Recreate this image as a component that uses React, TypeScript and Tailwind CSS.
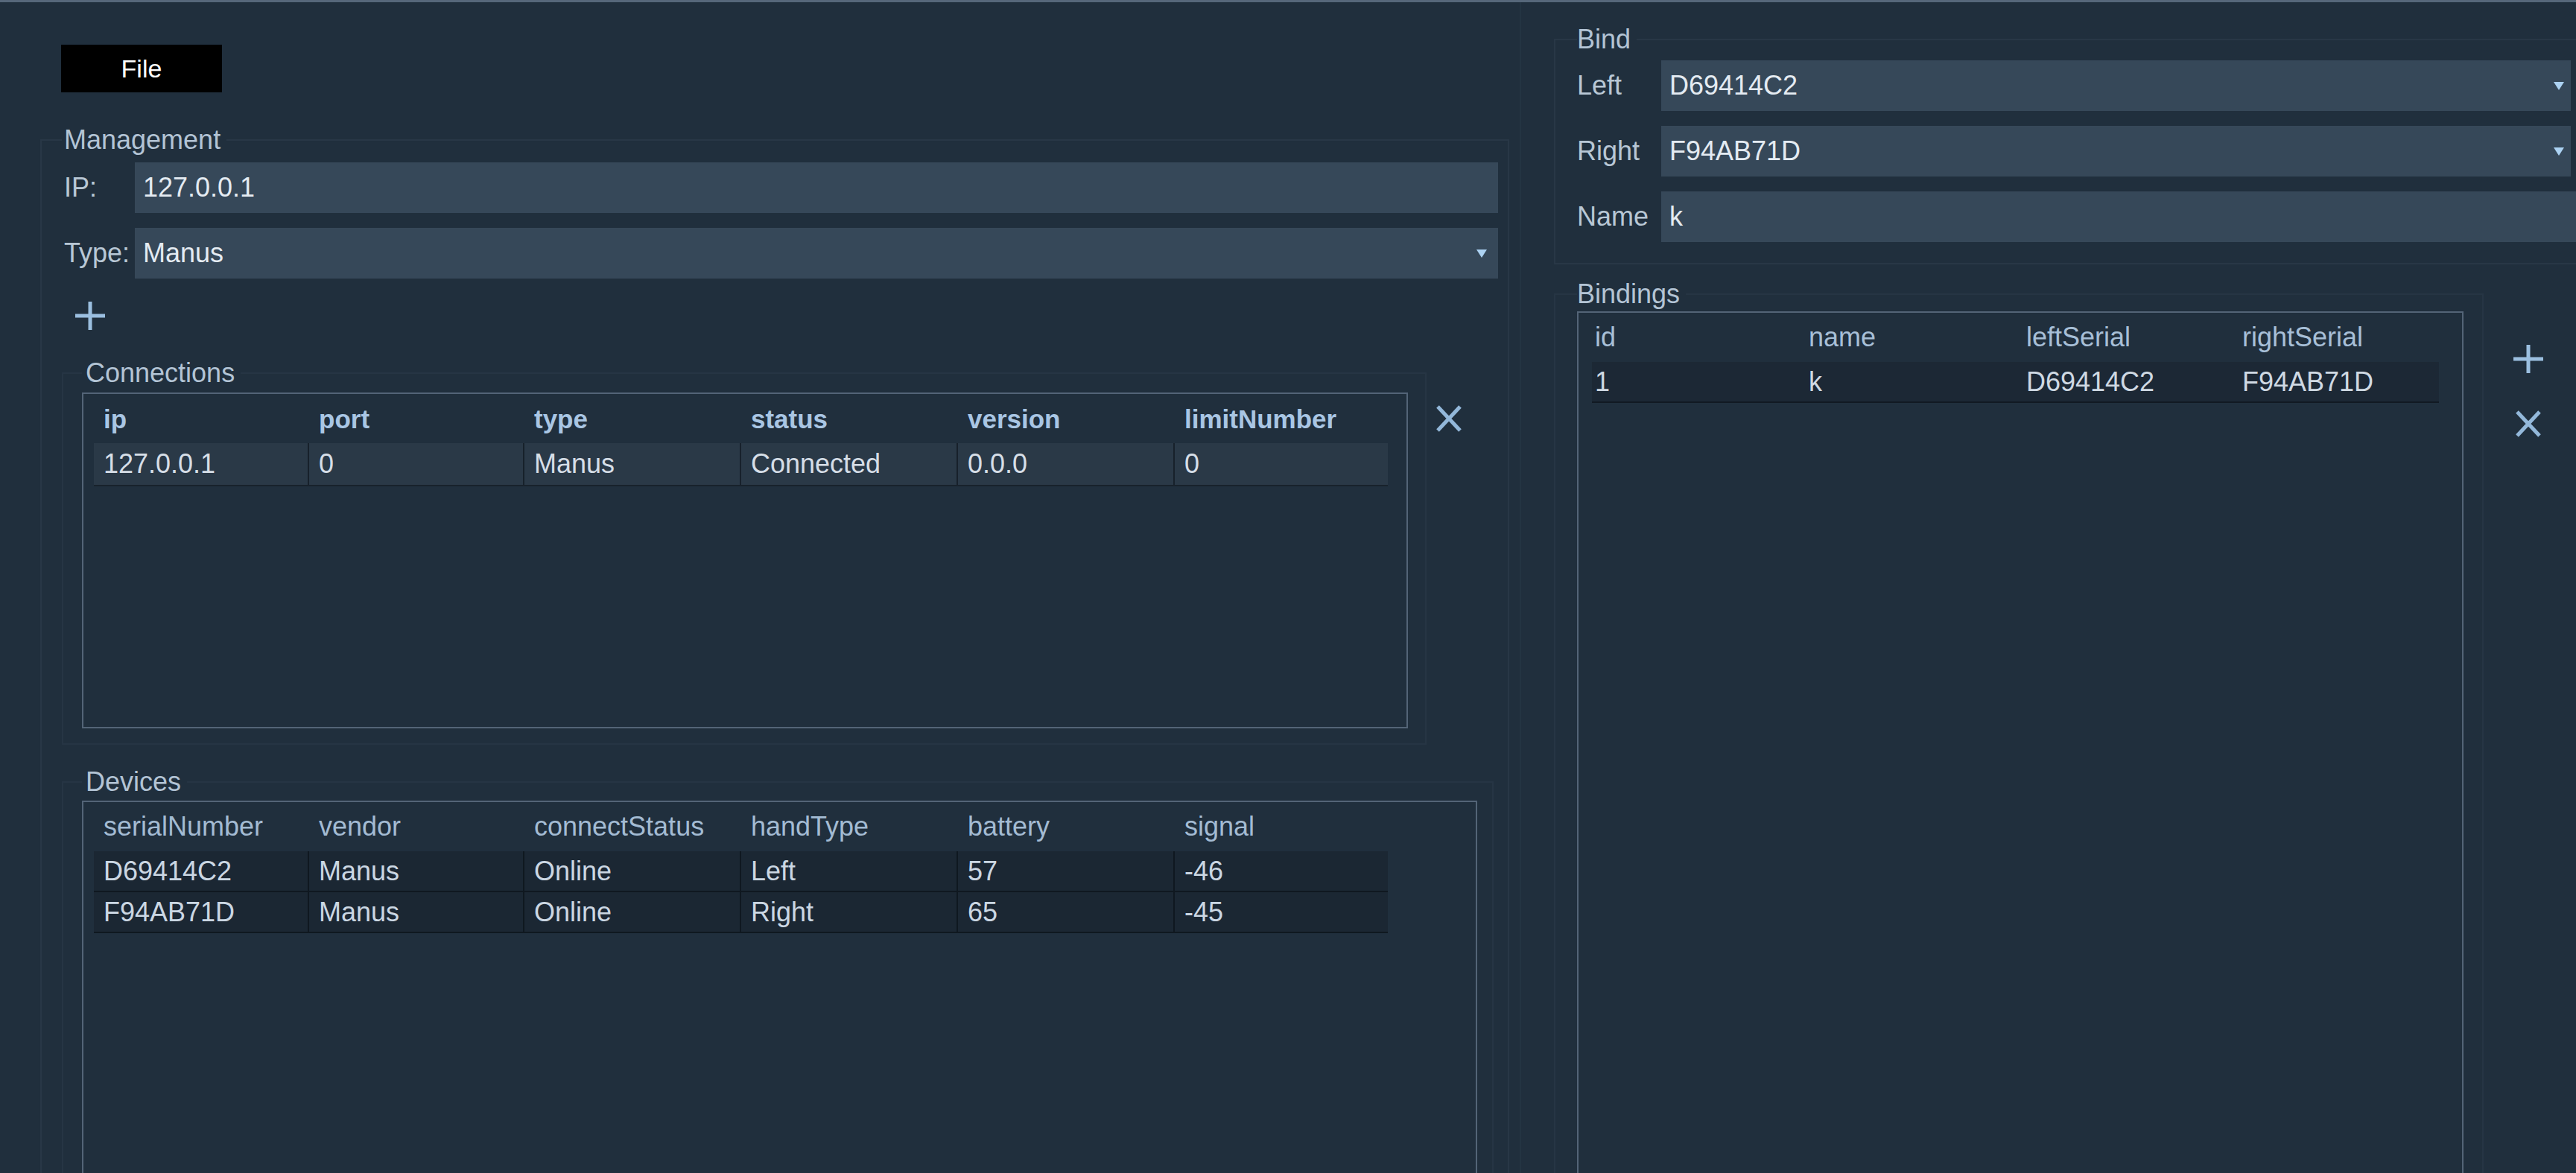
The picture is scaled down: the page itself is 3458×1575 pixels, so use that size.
import type { ReactNode } from "react";

type Col = { label: string; w: string };

const connCols: Col[] = [
  { label: "ip", w: "w-[289px]" },
  { label: "port", w: "w-[289px]" },
  { label: "type", w: "w-[291px]" },
  { label: "status", w: "w-[291px]" },
  { label: "version", w: "w-[291px]" },
  { label: "limitNumber", w: "w-[286px]" },
];

const deviceCols: Col[] = [
  { label: "serialNumber", w: "w-[289px]" },
  { label: "vendor", w: "w-[289px]" },
  { label: "connectStatus", w: "w-[291px]" },
  { label: "handType", w: "w-[291px]" },
  { label: "battery", w: "w-[291px]" },
  { label: "signal", w: "w-[286px]" },
];

const bindCols: Col[] = [
  { label: "id", w: "w-[287px]" },
  { label: "name", w: "w-[292px]" },
  { label: "leftSerial", w: "w-[290px]" },
  { label: "rightSerial", w: "w-[268px]" },
];

const connections = [["127.0.0.1", "0", "Manus", "Connected", "0.0.0", "0"]];

const devices = [
  ["D69414C2", "Manus", "Online", "Left", "57", "-46"],
  ["F94AB71D", "Manus", "Online", "Right", "65", "-45"],
];

const bindings = [["1", "k", "D69414C2", "F94AB71D"]];

function Legend({ children, className = "" }: { children: ReactNode; className?: string }) {
  return <legend className={`h-[40px] text-[36px] leading-[40px] text-[#b3c4d5] ${className}`}>{children}</legend>;
}

function Arrow({ className = "" }: { className?: string }) {
  return (
    <svg className={`ml-auto shrink-0 ${className}`} width="16" height="13" viewBox="0 0 16 13">
      <path d="M1 1h14L8 12z" fill="#acd2f2" />
    </svg>
  );
}

function PlusIcon() {
  return (
    <svg width="44" height="42" viewBox="0 0 44 42">
      <path d="M22 2v38M2 21h40" stroke="#9bbfe0" strokeWidth="5" />
    </svg>
  );
}

function CrossIcon() {
  return (
    <svg width="38" height="40" viewBox="0 0 38 40">
      <path d="M4 4l30 32M34 4L4 36" stroke="#93b8da" strokeWidth="5" />
    </svg>
  );
}

function Field({ label, value, labelW, boxW, arrow, arrowPad }: { label: string; value: string; labelW: string; boxW: string; arrow?: boolean; arrowPad?: string }) {
  return (
    <div className="flex items-center">
      <span className={`${labelW} shrink-0 text-[36px] leading-none text-[#b8c7d5]`}>{label}</span>
      <div className={`flex h-[68px] items-center bg-[#364859] ${boxW}`}>
        <span className="pl-[11px] text-[36px] leading-none text-[#e4ebf2]">{value}</span>
        {arrow ? <Arrow className={arrowPad} /> : null}
      </div>
    </div>
  );
}

export default function App() {
  return (
    <div className="flex h-[1575px] w-[3458px] overflow-hidden border-t-[3px] border-[#56677a] bg-[#202f3d] font-['Liberation_Sans',Arial,sans-serif] text-[36px]">
      {/* left: management */}
      <div className="w-[2040px] shrink-0">
        <div className="pl-[82px] pt-[57px]">
          <div className="flex h-[64px] w-[216px] items-center justify-center bg-black text-[34px] leading-none text-white">File</div>
        </div>

        <fieldset className="ml-[54px] mt-[44px] h-[1500px] w-[1972px] border-2 border-[#283746] pl-[27px] pr-[13px]">
          <Legend className="pl-[3px] pr-[8px]">Management</Legend>

          <div className="mt-[10px] pl-[3px]">
            <Field label="IP:" value="127.0.0.1" labelW="w-[95px]" boxW="flex-1" />
          </div>
          <div className="mt-[20px] pl-[3px]">
            <Field label="Type:" value="Manus" labelW="w-[95px]" boxW="flex-1" arrow arrowPad="mr-[14px]" />
          </div>

          <div className="ml-[16px] mt-[29px] h-[44px]">
            <PlusIcon />
          </div>

          <div className="mt-[34px] flex items-start">
            <fieldset className="w-[1832px] border-2 border-[#263544] pb-[20px] pl-[25px] pr-[23px]">
              <Legend className="pl-[5px] pr-[8px]">Connections</Legend>
              <div className="mt-[6px] h-[451px] border-2 border-[#536477]">
                <div className="ml-[14px] flex h-[66px] items-center">
                  {connCols.map((c) => (
                    <div key={c.label} className={`${c.w} pl-[13px] text-[35px] font-bold leading-none text-[#a9c6e4]`}>{c.label}</div>
                  ))}
                </div>
                {connections.map((row, i) => (
                  <div key={i} className="ml-[14px] flex h-[58px] w-[1737px] border-b-2 border-[#18222c] bg-[#2a3947]">
                    {row.map((cell, j) => (
                      <div key={j} className={`${connCols[j].w} flex items-center pl-[13px] leading-none text-[#d6dee7] ${j < row.length - 1 ? "border-r-2 border-[#17212b]" : ""}`}>{cell}</div>
                    ))}
                  </div>
                ))}
              </div>
            </fieldset>
            <div className="ml-[11px] mt-[61px]">
              <CrossIcon />
            </div>
          </div>

          <fieldset className="mt-[30px] w-[1922px] border-2 border-[#263544] pl-[25px] pr-[20px]">
            <Legend className="pl-[5px] pr-[8px]">Devices</Legend>
            <div className="mt-[5px] h-[600px] border-2 border-[#536477]">
              <div className="ml-[14px] flex h-[66px] items-center">
                {deviceCols.map((c) => (
                  <div key={c.label} className={`${c.w} pl-[13px] leading-none text-[#a3bbd3]`}>{c.label}</div>
                ))}
              </div>
              {devices.map((row, i) => (
                <div key={i} className="ml-[14px] flex h-[55px] w-[1737px] border-b-2 border-[#0f1820] bg-[#1b2733]">
                  {row.map((cell, j) => (
                    <div key={j} className={`${deviceCols[j].w} flex items-center pl-[13px] leading-none text-[#cbd7e3] ${j < row.length - 1 ? "border-r-2 border-[#0f1820]" : ""}`}>{cell}</div>
                  ))}
                </div>
              ))}
            </div>
          </fieldset>
        </fieldset>
      </div>

      {/* right: bind */}
      <div className="min-w-0 flex-1 overflow-hidden border-l-2 border-[#243442]">
        <fieldset className="ml-[44px] mt-[30px] w-[1390px] border-2 border-[#283746] pb-[28px] pl-[29px]">
          <Legend className="pr-[8px]">Bind</Legend>
          <div className="mt-[8px] flex flex-col gap-[20px]">
            <Field label="Left" value="D69414C2" labelW="w-[113px]" boxW="w-[1221px]" arrow arrowPad="mr-[8px]" />
            <Field label="Right" value="F94AB71D" labelW="w-[113px]" boxW="w-[1221px]" arrow arrowPad="mr-[8px]" />
            <Field label="Name" value="k" labelW="w-[113px]" boxW="w-[1260px]" />
          </div>
        </fieldset>

        <div className="mt-[20px] flex items-start">
          <fieldset className="ml-[44px] h-[1300px] w-[1248px] border-2 border-[#263544] pl-[29px] pr-[25px]">
            <Legend className="pr-[8px]">Bindings</Legend>
            <div className="mt-[3px] h-[1200px] border-2 border-[#536477]">
              <div className="ml-[18px] flex h-[66px] items-center">
                {bindCols.map((c) => (
                  <div key={c.label} className={`${c.w} pl-[4px] leading-none text-[#a7bfd7]`}>{c.label}</div>
                ))}
              </div>
              {bindings.map((row, i) => (
                <div key={i} className="ml-[18px] flex h-[55px] w-[1137px] border-b-2 border-[#111a23] bg-[#1c2835]">
                  {row.map((cell, j) => (
                    <div key={j} className={`${bindCols[j].w} flex items-center pl-[4px] leading-none text-[#cfd9e3]`}>{cell}</div>
                  ))}
                </div>
              ))}
            </div>
          </fieldset>
          <div className="ml-[38px] mt-[86px] flex flex-col items-center gap-[46px]">
            <PlusIcon />
            <CrossIcon />
          </div>
        </div>
      </div>
    </div>
  );
}
